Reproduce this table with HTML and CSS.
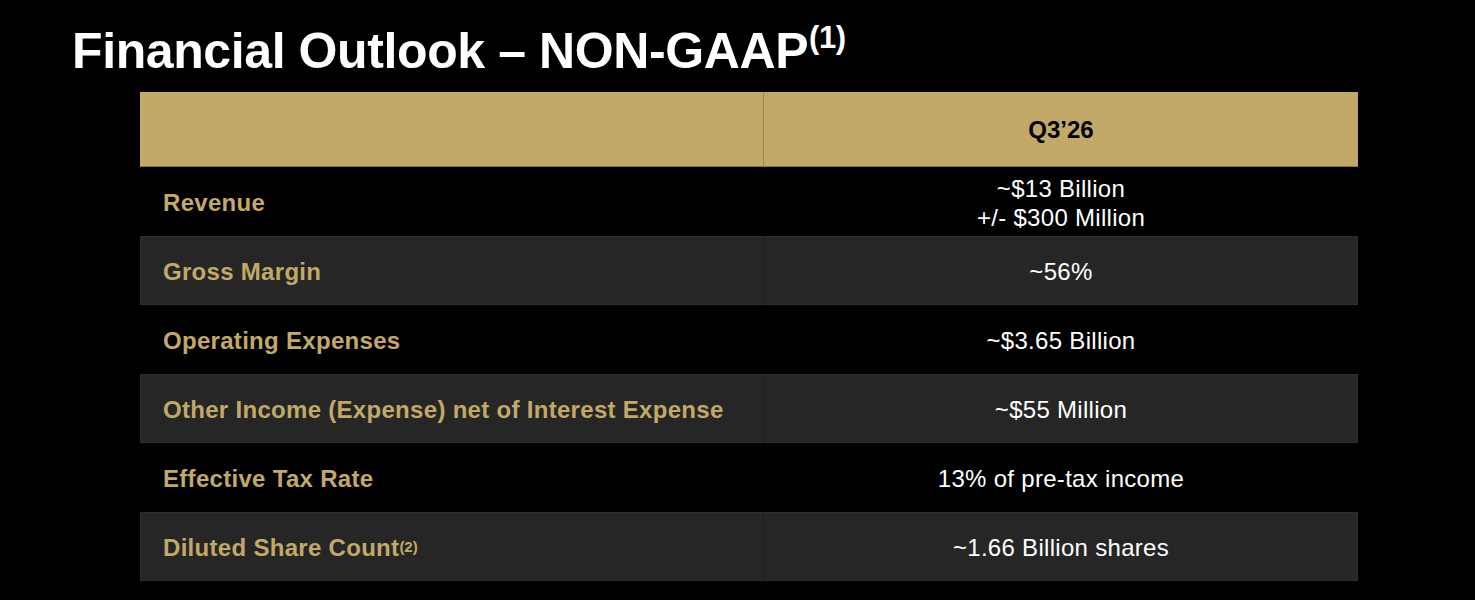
FILE: index.html
```html
<!DOCTYPE html>
<html>
<head>
<meta charset="utf-8">
<link rel="stylesheet" href="styles.css">
</head>
<body>
<div class="slide">
  <h1 class="title">Financial Outlook – NON-GAAP<sup class="title-sup">(1)</sup></h1>
  <div class="table">
    <div class="row head">
      <div class="cell label"></div>
      <div class="cell value">Q3’26</div>
    </div>
    <div class="row">
      <div class="cell label">Revenue</div>
      <div class="cell value">~$13 Billion<br>+/- $300 Million</div>
    </div>
    <div class="row alt">
      <div class="cell label">Gross Margin</div>
      <div class="cell value">~56%</div>
    </div>
    <div class="row">
      <div class="cell label">Operating Expenses</div>
      <div class="cell value">~$3.65 Billion</div>
    </div>
    <div class="row alt">
      <div class="cell label">Other Income (Expense) net of Interest Expense</div>
      <div class="cell value">~$55 Million</div>
    </div>
    <div class="row">
      <div class="cell label">Effective Tax Rate</div>
      <div class="cell value">13% of pre-tax income</div>
    </div>
    <div class="row alt">
      <div class="cell label">Diluted Share Count<sup class="label-sup">(2)</sup></div>
      <div class="cell value">~1.66 Billion shares</div>
    </div>
  </div>
</div>
</body>
</html>
```

FILE: styles.css
```css
html, body {
  margin: 0;
  padding: 0;
  background: #000;
}
.slide {
  width: 1475px;
  height: 600px;
  background: #000;
  font-family: "Liberation Sans", Arial, sans-serif;
  padding-top: 21px;
  box-sizing: border-box;
}
.title {
  margin: 0 0 0 72px;
  color: #fff;
  font-size: 50px;
  font-weight: bold;
  line-height: 60px;
  height: 71px;
  letter-spacing: -0.4px;
}
.title-sup {
  font-size: 31px;
  vertical-align: 0;
  position: relative;
  top: -20px;
  margin-left: 1px;
}
.table {
  margin-left: 140px;
  width: 1218px;
  display: flex;
  flex-direction: column;
}
.row {
  display: grid;
  grid-template-columns: 624px 594px;
  height: 69px;
  box-sizing: border-box;
}
.row.head {
  height: 75px;
  background: #c2a967;
  border-bottom: 1px solid #8b7440;
}
.row.head .label {
  border-right: 1px solid #9c8550;
}
.row.head .value {
  color: #000;
  font-weight: bold;
  font-size: 24px;
  letter-spacing: 0;
  padding-top: 1px;
}
.row.alt {
  background: #262626;
  box-shadow: inset 0 0 0 1px #2f2f2f;
}
.row.alt .label {
  border-right: 1px solid #1c1c1c;
}
.cell {
  display: flex;
  align-items: center;
  padding-top: 2px;
  box-sizing: border-box;
}
.label {
  padding-left: 23px;
  color: #c2a967;
  font-weight: bold;
  font-size: 24px;
  letter-spacing: 0.3px;
}
.value {
  justify-content: center;
  text-align: center;
  color: #fff;
  font-size: 24px;
  line-height: 29px;
  letter-spacing: 0.3px;
}
.label-sup {
  font-size: 15px;
  vertical-align: 0;
  position: relative;
  top: 4px;
  margin-left: 0;
  letter-spacing: 0;
  align-self: flex-start;
  line-height: 15px;
  margin-top: 21px;
}
```
